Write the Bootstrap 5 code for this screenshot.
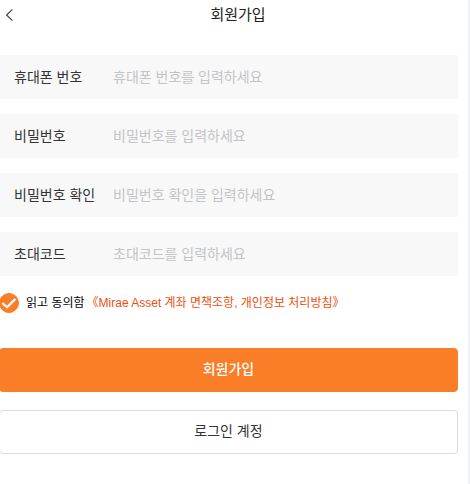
<!DOCTYPE html>
<html lang="ko">
<head>
<meta charset="utf-8">
<meta name="viewport" content="width=device-width, initial-scale=1">
<title>회원가입</title>
<link href="https://cdn.jsdelivr.net/npm/bootstrap@5.3.0/dist/css/bootstrap.min.css" rel="stylesheet">
<style>
  body {
    font-family: "Liberation Sans", "Noto Sans CJK KR", sans-serif;
    font-size: 14px;
    line-height: 20px;
    color: #333;
    background: #fff;
  }
  .signup-page { border-right: 2px solid #f2f2fa; }
  .top-bar { height: 30px; display: grid; grid-template-columns: 20px 1fr 12px; align-items: center; }
  .page-title { font-size: 15px; line-height: 20px; color: #222; }
  .back-button { width: 20px; height: 30px; }
  .signup-form { margin-left: -1px; padding: 25px 10px 0 0; }
  .field-stack { gap: 15px; }
  .field-row { height: 44px; padding-left: 15px; background: #f8f8f8; }
  .field-row label { flex: 0 0 99px; }
  .field-row input, .field-row input:focus {
    min-width: 0; height: 44px; font-size: 14px; line-height: 20px;
    color: #333; background: transparent; box-shadow: none;
  }
  .field-row input::placeholder { color: #c3c4c7; }
  .agree-row { margin-top: 17px; height: 20px; gap: 7px; font-size: 12px; line-height: 18px; color: #000; }
  .agree-row .form-check-input {
    width: 20px; height: 20px; margin: 0; border-color: #fa7d28; border-radius: 50%;
  }
  .agree-row .form-check-input:checked {
    background-color: #fa7d28;
    background-size: 20px 20px;
    background-image: url("data:image/svg+xml,%3Csvg xmlns='http://www.w3.org/2000/svg' viewBox='0 0 20 20'%3E%3Cpath d='M4 10.6L8 14.3L15.7 6.6' fill='none' stroke='%23fff' stroke-width='2.2' stroke-linecap='round' stroke-linejoin='round'/%3E%3C/svg%3E");
  }
  .terms-link { color: #ee4f0c; }
  .agree-text { gap: 2px; }
  .form-actions { margin-top: 35px; gap: 18px; }
  .form-actions .btn { height: 44px; padding: 0 0 2px; font-size: 14px; line-height: 20px; border-radius: 4px; }
  .btn-signup, .btn-signup:hover { color: #fff; background: #fa7d28; border-color: #fa7d28; font-weight: 500; }
  .btn-login, .btn-login:hover { color: #333; background: #fff; border-color: #dcdcdc; }
</style>
<script src="https://cdn.jsdelivr.net/npm/bootstrap@5.3.0/dist/js/bootstrap.bundle.min.js" defer></script>
</head>
<body>
<div class="signup-page min-vh-100">
  <header class="top-bar">
    <button type="button" class="back-button btn p-0 border-0 d-flex align-items-center" aria-label="뒤로">
      <svg width="20" height="20" viewBox="0 0 20 20" fill="none" stroke="#444" stroke-width="1.2" aria-hidden="true"><path d="M12.4 4.4L6.6 10L12.4 15.6"/></svg>
    </button>
    <h1 class="page-title text-center fw-normal m-0">회원가입</h1>
  </header>
  <form class="signup-form">
    <div class="field-stack d-flex flex-column">
      <div class="field-row d-flex align-items-center">
        <label for="phone">휴대폰 번호</label>
        <input id="phone" type="tel" class="form-control border-0 rounded-0 p-0" placeholder="휴대폰 번호를 입력하세요">
      </div>
      <div class="field-row d-flex align-items-center">
        <label for="password">비밀번호</label>
        <input id="password" type="password" class="form-control border-0 rounded-0 p-0" placeholder="비밀번호를 입력하세요">
      </div>
      <div class="field-row d-flex align-items-center">
        <label for="confirm">비밀번호 확인</label>
        <input id="confirm" type="password" class="form-control border-0 rounded-0 p-0" placeholder="비밀번호 확인을 입력하세요">
      </div>
      <div class="field-row d-flex align-items-center">
        <label for="invite">초대코드</label>
        <input id="invite" type="text" class="form-control border-0 rounded-0 p-0" placeholder="초대코드를 입력하세요">
      </div>
    </div>
    <div class="agree-row d-flex align-items-center">
      <input id="agree" type="checkbox" class="form-check-input flex-shrink-0" checked>
      <div class="agree-text d-flex">
        <label for="agree">읽고 동의함</label>
        <a href="#terms" class="terms-link text-decoration-none">《Mirae Asset 계좌 면책조항, 개인정보 처리방침》</a>
      </div>
    </div>
    <div class="form-actions d-flex flex-column">
      <button type="submit" class="btn btn-signup">회원가입</button>
      <button type="button" class="btn btn-login">로그인 계정</button>
    </div>
  </form>
</div>
</body>
</html>
